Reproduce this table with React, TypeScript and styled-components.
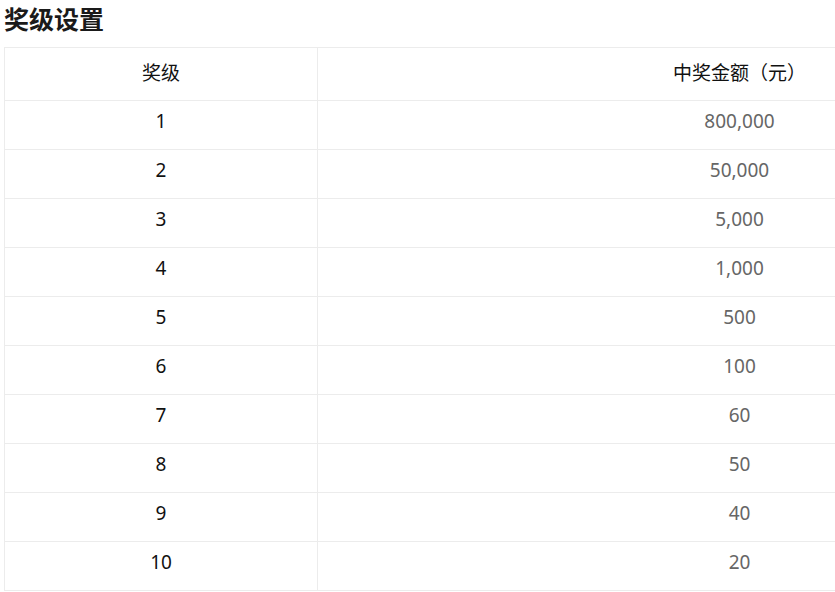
import React from "react";
import styled, { createGlobalStyle } from "styled-components";

const Global = createGlobalStyle`
  html, body { margin: 0; padding: 0; background: #fff; }
  body { font-family: "Noto Sans CJK SC", "Noto Sans", sans-serif; }
`;

const Page = styled.div`
  padding: 0 4px;
  width: max-content;
`;

const Title = styled.h2`
  margin: 0;
  padding-top: 2px;
  height: 45px;
  font-size: 25px;
  line-height: 32px;
  font-weight: 700;
  color: #1a1a1a;
`;

const Table = styled.table`
  border-collapse: collapse;
  table-layout: fixed;
  width: 1158px;
`;

const Cell = styled.td<{ $w?: number; $muted?: boolean; $head?: boolean }>`
  box-sizing: border-box;
  border: 1px solid #ececec;
  width: ${(p) => (p.$w ? `${p.$w}px` : "auto")};
  height: ${(p) => (p.$head ? 53 : 49)}px;
  padding: 0 0 ${(p) => (p.$head ? 5 : 8)}px;
  text-align: center;
  vertical-align: middle;
  font-size: 19px;
  line-height: 24px;
  font-weight: 400;
  color: ${(p) => (p.$muted ? "#666" : "#111")};
  font-family: ${(p) =>
    p.$head ? `"Noto Sans CJK SC", sans-serif` : `"Noto Sans", "Noto Sans CJK SC", sans-serif`};
`;

const rows: [string, string][] = [
  ["1", "800,000"],
  ["2", "50,000"],
  ["3", "5,000"],
  ["4", "1,000"],
  ["5", "500"],
  ["6", "100"],
  ["7", "60"],
  ["8", "50"],
  ["9", "40"],
  ["10", "20"],
];

export default function App() {
  return (
    <Page>
      <Global />
      <Title>奖级设置</Title>
      <Table>
        <thead>
          <tr>
            <Cell as="th" $head $w={313}>
              奖级
            </Cell>
            <Cell as="th" $head>
              中奖金额（元）
            </Cell>
          </tr>
        </thead>
        <tbody>
          {rows.map(([lvl, amt]) => (
            <tr key={lvl}>
              <Cell>{lvl}</Cell>
              <Cell $muted>{amt}</Cell>
            </tr>
          ))}
        </tbody>
      </Table>
    </Page>
  );
}
